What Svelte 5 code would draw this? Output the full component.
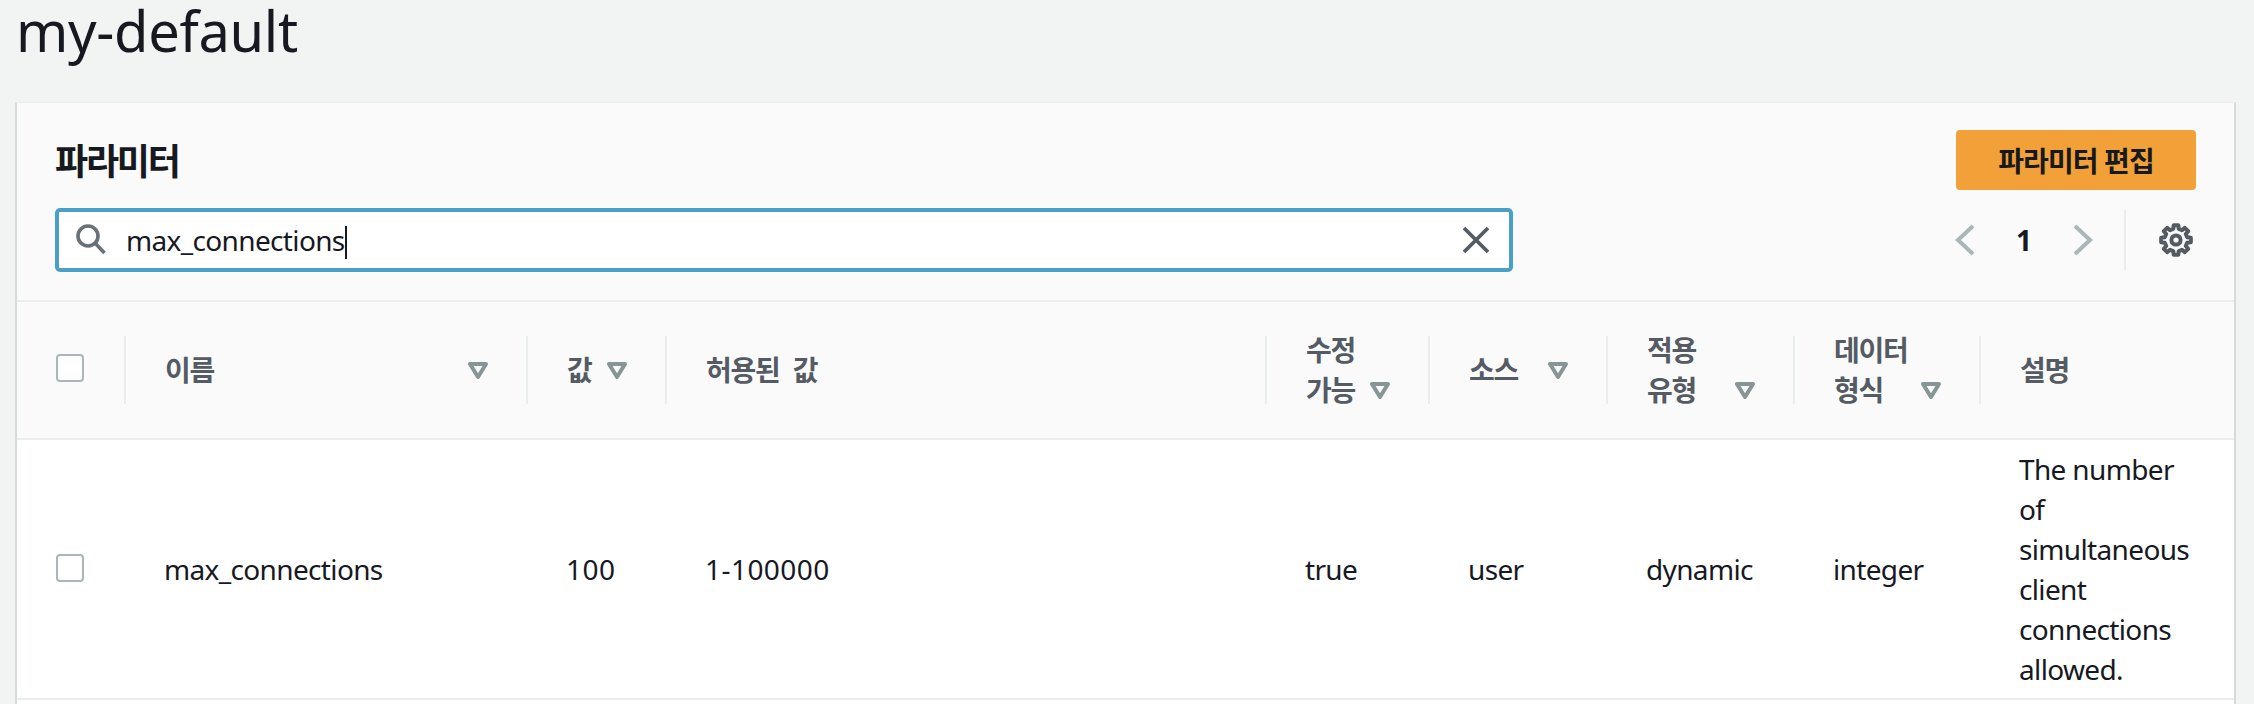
<script>
  const columns = [
    { key: 'select', width: 107 },
    { key: 'name', width: 402, label: ['이름'], sort: true },
    { key: 'value', width: 139, label: ['값'], sort: true },
    { key: 'allowed', width: 600, label: ['허용된 값'] },
    { key: 'modifiable', width: 163, label: ['수정', '가능'], sort: true },
    { key: 'source', width: 178, label: ['소스'], sort: true },
    { key: 'applyType', width: 187, label: ['적용', '유형'], sort: true },
    { key: 'dataType', width: 186, label: ['데이터', '형식'], sort: true },
    { key: 'description', width: 255, label: ['설명'] }
  ];
  const row = [
    { text: 'max_connections' },
    { text: '100', numeric: true },
    { text: '1-100000', numeric: true },
    { text: 'true' },
    { text: 'user' },
    { text: 'dynamic' },
    { text: 'integer' },
    { text: 'The number of simultaneous client connections allowed.' }
  ];

  function gearPath(cx, cy, rOuter, rInner, teeth) {
    const step = (Math.PI * 2) / teeth;
    const pts = [];
    for (let i = 0; i < teeth; i++) {
      const a = i * step - Math.PI / 2;
      const w = step * 0.2;
      const mid = step * 0.3;
      [[-mid, rInner], [-w, rOuter], [w, rOuter], [mid, rInner]].forEach(([d, r]) => {
        pts.push(`${(cx + r * Math.cos(a + d)).toFixed(2)} ${(cy + r * Math.sin(a + d)).toFixed(2)}`);
      });
    }
    return 'M' + pts.join('L') + 'Z';
  }
  const gear = gearPath(17, 17, 15, 11.5, 8);
</script>

<div class="page">
  <h1>my-default</h1>
  <section class="panel">
    <header class="tools">
      <div class="title-row">
        <h2>파라미터</h2>
        <button class="primary">파라미터 편집</button>
      </div>
      <div class="filter-row">
        <div class="search">
          <svg class="search-icon" width="36" height="36" viewBox="0 0 36 36" fill="none" stroke="#687078" stroke-width="3.6">
            <circle cx="15" cy="14" r="10"/>
            <path d="M22 21l9.5 10"/>
          </svg>
          <span class="query">max_connections<i class="caret"></i></span>
          <svg class="clear" width="30" height="30" viewBox="0 0 30 30" fill="none" stroke="#545b64" stroke-width="3.8">
            <path d="M3 3l24 24M27 3L3 27"/>
          </svg>
        </div>
        <div class="pager">
          <svg width="20" height="32" viewBox="0 0 20 32" fill="none" stroke="#aab7b8" stroke-width="4"><path d="M18 2L3 16l15 14"/></svg>
          <span class="page-no">1</span>
          <svg width="20" height="32" viewBox="0 0 20 32" fill="none" stroke="#aab7b8" stroke-width="4"><path d="M2 2l15 14L2 30"/></svg>
          <span class="divider"></span>
          <svg class="gear" width="34" height="34" viewBox="0 0 34 34" fill="none" stroke="#545b64" stroke-width="4" stroke-linejoin="round">
            <path d={gear}/>
            <circle cx="17" cy="17" r="4.6"/>
          </svg>
        </div>
      </div>
    </header>

    <table>
      <colgroup>
        {#each columns as c}<col style="width:{c.width}px" />{/each}
      </colgroup>
      <thead>
        <tr>
          {#each columns as c, i}
            <th>
              {#if i === 0}
                <div class="check-cell top"><span class="check"></span></div>
              {:else}
                <div class="head">
                  <span class="label">
                    {#each c.label as line, j}{#if j > 0}<br />{/if}{line}{/each}
                  </span>
                  {#if c.sort}
                    <svg class="sort" class:low={c.label.length > 1} width="20" height="17" viewBox="0 0 20 17">
                      <path d="M2 2h16L10 15z" fill="none" stroke="#879596" stroke-width="4" stroke-linejoin="round"/>
                    </svg>
                  {/if}
                </div>
              {/if}
            </th>
          {/each}
        </tr>
      </thead>
      <tbody>
        <tr>
          <td class="check-td"><div class="check-cell"><span class="check"></span></div></td>
          {#each row as cell}
            <td class:numeric={cell.numeric}>{cell.text}</td>
          {/each}
        </tr>
      </tbody>
    </table>
  </section>
</div>

<style>
  :global(body) {
    margin: 0;
    background: #f2f3f3;
    font-family: "Noto Sans", "Noto Sans CJK KR", sans-serif;
    color: #16191f;
    overflow: hidden;
  }
  .page {
    height: 704px;
    padding: 0 18px 0 15px;
    overflow: hidden;
    box-sizing: border-box;
  }
  h1 {
    margin: 0;
    height: 102px;
    padding: 0 0 0 1px;
    font-size: 56px;
    font-weight: 400;
    line-height: 60px;
    box-sizing: border-box;
    letter-spacing: -0.3px;
  }
  .panel {
    background: #fff;
    border-left: 2px solid #d5dbdb;
    border-right: 2px solid #d5dbdb;
    border-top: 1px solid #eaeded;
    min-height: 620px;
  }
  .tools {
    background: #fafafa;
    border-bottom: 2px solid #eaeded;
    padding: 27px 38px;
    height: 199px;
    box-sizing: border-box;
  }
  .title-row {
    display: flex;
    justify-content: space-between;
    align-items: center;
    height: 60px;
  }
  h2 {
    margin: 0;
    font-size: 36px;
    font-weight: 700;
    line-height: 44px;
    letter-spacing: -2.2px;
    position: relative;
    top: 2px;
  }
  .primary {
    width: 240px;
    height: 60px;
    padding: 0;
    border: 0;
    border-radius: 4px;
    background: #f2a038;
    color: #16191f;
    font: 700 28px "Noto Sans", "Noto Sans CJK KR", sans-serif;
    letter-spacing: -0.9px;
  }
  .filter-row {
    display: flex;
    justify-content: space-between;
    align-items: center;
    margin-top: 18px;
    height: 64px;
  }
  .search {
    width: 1458px;
    height: 64px;
    box-sizing: border-box;
    border: 4px solid #4a9fc8;
    border-radius: 5px;
    background: #fff;
    display: flex;
    align-items: center;
    padding: 0 18px 0 14px;
  }
  .search-icon { flex: none; }
  .query {
    margin-left: 17px;
    font-size: 28px;
    line-height: 40px;
    flex: 1;
    white-space: nowrap;
    letter-spacing: -0.65px;
  }
  .caret {
    display: inline-block;
    width: 2px;
    height: 33px;
    background: #16191f;
    vertical-align: -8px;
  }
  .pager {
    display: flex;
    align-items: center;
    width: 243px;
    margin-right: -2px;
    height: 60px;
  }
  .page-no {
    width: 98px;
    text-align: center;
    font-size: 28px;
    font-weight: 700;
  }
  .divider {
    width: 2px;
    height: 60px;
    background: #eaeded;
    margin: 0 33px 0 31px;
  }
  table {
    border-collapse: collapse;
    table-layout: fixed;
    width: 2217px;
    font-size: 28px;
    line-height: 40px;
  }
  th {
    background: #fafafa;
    height: 136px;
    padding: 0;
    border-bottom: 2px solid #eaeded;
    color: #545b64;
    font-weight: 700;
    text-align: left;
    letter-spacing: -1.2px;
    word-spacing: 7px;
  }
  .head {
    height: 68px;
    border-left: 2px solid #eaeded;
    padding: 0 38px;
    display: flex;
    align-items: center;
    justify-content: space-between;
  }
  .label { white-space: nowrap; padding-left: 1px; }
  .sort { flex: none; }
  .sort.low { margin-top: 40px; }
  td {
    padding: 9px 38px 9px 40px;
    border-bottom: 2px solid #eaeded;
    vertical-align: middle;
    letter-spacing: -0.65px;
  }
  td.numeric { letter-spacing: 0.45px; }
  td.check-td { padding: 0; }
  .check-cell {
    display: flex;
    padding-left: 39px;
  }
  .check {
    display: block;
    width: 28px;
    height: 28px;
    box-sizing: border-box;
    border: 2px solid #aab7b8;
    border-radius: 4px;
    background: #fff;
    margin-top: -3px;
  }
  .top .check { margin-top: -5px; }
</style>
